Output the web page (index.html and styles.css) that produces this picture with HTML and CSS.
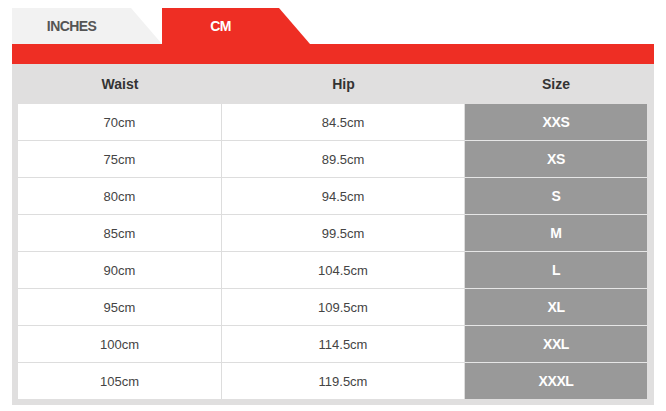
FILE: index.html
```html
<!DOCTYPE html>
<html>
<head>
<meta charset="utf-8">
<link rel="stylesheet" href="styles.css">
</head>
<body>
<div class="chart">
  <div class="tabs">
    <div class="tab tab-inactive"><span>INCHES</span></div>
    <div class="tab tab-active"><span>CM</span></div>
  </div>
  <div class="bar"></div>
  <div class="panel">
    <div class="row head">
      <div class="cell">Waist</div>
      <div class="cell">Hip</div>
      <div class="cell">Size</div>
    </div>
    <div class="body">
      <div class="row"><div class="cell">70cm</div><div class="cell">84.5cm</div><div class="cell size">XXS</div></div>
      <div class="row"><div class="cell">75cm</div><div class="cell">89.5cm</div><div class="cell size">XS</div></div>
      <div class="row"><div class="cell">80cm</div><div class="cell">94.5cm</div><div class="cell size">S</div></div>
      <div class="row"><div class="cell">85cm</div><div class="cell">99.5cm</div><div class="cell size">M</div></div>
      <div class="row"><div class="cell">90cm</div><div class="cell">104.5cm</div><div class="cell size">L</div></div>
      <div class="row"><div class="cell">95cm</div><div class="cell">109.5cm</div><div class="cell size">XL</div></div>
      <div class="row"><div class="cell">100cm</div><div class="cell">114.5cm</div><div class="cell size">XXL</div></div>
      <div class="row"><div class="cell">105cm</div><div class="cell">119.5cm</div><div class="cell size">XXXL</div></div>
    </div>
  </div>
</div>
</body>
</html>
```
FILE: styles.css
```css
html, body {
  margin: 0;
  padding: 0;
  background: #ffffff;
}
body {
  font-family: "Liberation Sans", Arial, sans-serif;
  color: #333333;
}
.chart {
  width: 642px;
  margin: 8px 0 0 12px;
}
.tabs {
  display: flex;
  height: 36px;
}
.tab {
  height: 36px;
  display: flex;
  align-items: center;
  font-size: 14px;
  font-weight: bold;
  letter-spacing: -0.6px;
}
.tab-inactive {
  width: 150px;
  background: #f2f2f2;
  color: #555555;
  clip-path: polygon(0 0, 119px 0, 150px 36px, 0 36px);
}
.tab-inactive span {
  width: 119px;
  text-align: center;
}
.tab-active {
  width: 148px;
  background: #ee2e24;
  color: #ffffff;
  clip-path: polygon(0 0, 117px 0, 148px 36px, 0 36px);
}
.tab-active span {
  width: 117px;
  text-align: center;
}
.bar {
  height: 20px;
  background: #ee2e24;
}
.panel {
  background: #e0dfdf;
  padding: 0 7px 6px 6px;
}
.row {
  display: grid;
  grid-template-columns: 204px 243px 182px;
}
.head {
  height: 40px;
}
.head .cell {
  display: flex;
  align-items: center;
  justify-content: center;
  font-size: 14px;
  font-weight: bold;
  color: #333333;
  padding-bottom: 1px;
}
.body .row {
  height: 37px;
}
.body .row:last-child {
  height: 36px;
}
.body .cell {
  background: #ffffff;
  display: flex;
  align-items: center;
  justify-content: center;
  font-size: 13px;
  color: #444444;
  border-right: 1px solid #dddddd;
  border-bottom: 1px solid #dddddd;
}
.body .row:last-child .cell {
  border-bottom: none;
}
.body .cell.size {
  background: #999999;
  color: #ffffff;
  font-size: 14px;
  font-weight: bold;
  letter-spacing: -0.4px;
  border-right: none;
  border-bottom-color: #e6e6e6;
}
```
